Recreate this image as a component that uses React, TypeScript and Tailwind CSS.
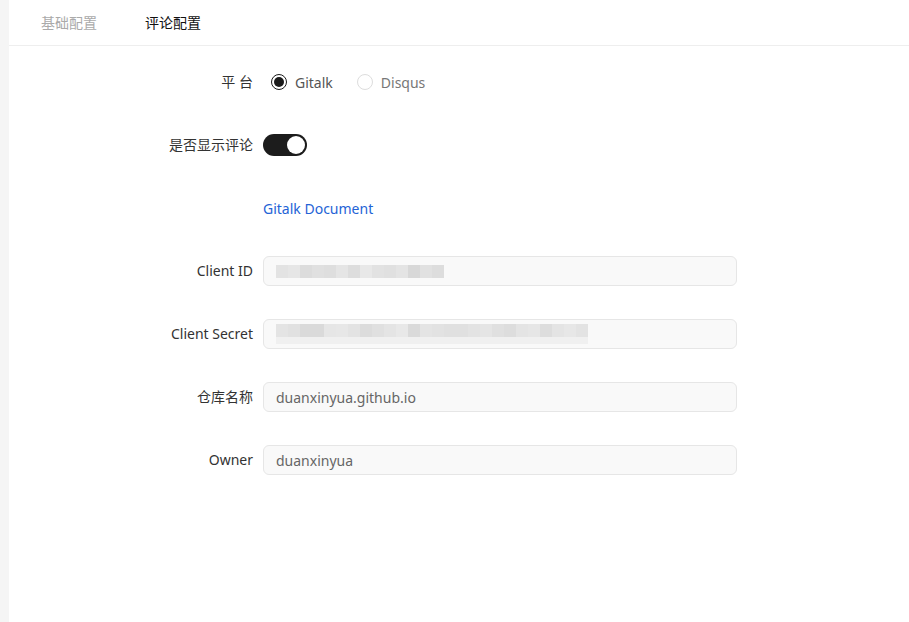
import { useState } from "react";

const font = {
  fontFamily: '"Noto Sans", "Noto Sans CJK SC", sans-serif',
};

function Row({ label, children }: { label: string; children: React.ReactNode }) {
  return (
    <div className="flex h-[30px] items-center">
      <label className="w-[254px] shrink-0 pr-[10px] text-right text-[14px] leading-[20px] text-[#333]">{label}</label>
      <div className="flex flex-1 items-center">{children}</div>
    </div>
  );
}

function Radio({ checked, label }: { checked: boolean; label: string }) {
  return (
    <span className="mr-[24px] flex items-center gap-[8px]">
      <span
        className={
          checked
            ? "flex h-[16px] w-[16px] items-center justify-center rounded-full border border-[#1a1a1a] bg-white"
            : "h-[16px] w-[16px] rounded-full border border-[#ddd] bg-white"
        }
      >
        {checked && <span className="h-[10px] w-[10px] rounded-full bg-[#1a1a1a]" />}
      </span>
      <span className={checked ? "text-[14px] text-[#555]" : "text-[14px] text-[#777]"}>{label}</span>
    </span>
  );
}

// blurred value: a row of grey blocks standing in for masked text
function Blur({ shades }: { shades: string[] }) {
  return (
    <div className="flex h-[13px]">
      {shades.map((s, i) => (
        <span key={i} className="h-full w-[12px]" style={{ backgroundColor: s }} />
      ))}
    </div>
  );
}

function Field({ children }: { children: React.ReactNode }) {
  return (
    <div className="flex h-[30px] w-[474px] items-center rounded-[6px] border border-[#e6e6e6] bg-[#f9f9f9] px-[12px] text-[14px] text-[#666]">
      {children}
    </div>
  );
}

export default function App() {
  const [on, setOn] = useState(true);
  const idShades = ["#e3e3e3", "#e6e6e6", "#dcdcdc", "#e0e0e0", "#dedede", "#e5e5e5", "#dddddd", "#e8e8e8", "#e2e2e2", "#e0e0e0", "#e4e4e4", "#d8d8d8", "#e1e1e1", "#dddddd"];
  const secretShades = ["#e4e4e4", "#e1e1e1", "#dadada", "#dadada", "#e6e6e6", "#e7e7e7", "#e3e3e3", "#dcdcdc", "#e0e0e0", "#e4e4e4", "#e8e8e8", "#dadada", "#e4e4e4", "#e2e2e2", "#e0e0e0", "#e0e0e0", "#e3e3e3", "#e5e5e5", "#e0e0e0", "#dddddd", "#e4e4e4", "#e6e6e6", "#dddddd", "#e4e4e4", "#e7e7e7", "#e3e3e3"];

  return (
    <div className="flex min-h-[622px] w-full bg-white" style={font}>
      <div className="w-[9px] shrink-0 bg-[#f5f5f5]" />
      <div className="flex-1">
        <div className="flex h-[46px] items-center gap-[48px] border-b border-[#eeeeee] pl-[32px]">
          <span className="text-[14px] text-[#aaa]">基础配置</span>
          <span className="text-[14px] text-[#111]">评论配置</span>
        </div>

        <div className="flex flex-col gap-[33px] pt-[21px]">
          <Row label="平 台">
            <div className="ml-[8px] flex items-center">
              <Radio checked label="Gitalk" />
              <Radio checked={false} label="Disqus" />
            </div>
          </Row>

          <Row label="是否显示评论">
            <button
              onClick={() => setOn(!on)}
              className="flex h-[22px] w-[44px] items-center justify-end rounded-full bg-[#1c1c1c] p-[2px]"
            >
              <span className="h-[18px] w-[18px] rounded-full bg-white" />
            </button>
          </Row>

          <Row label="">
            <a className="text-[14px] text-[#2463d6]">Gitalk Document</a>
          </Row>

          <Row label="Client ID">
            <Field>
              <Blur shades={idShades} />
            </Field>
          </Row>

          <Row label="Client Secret">
            <Field>
              <div className="flex flex-col">
                <Blur shades={secretShades} />
                <div className="flex h-[7px]">
                  {secretShades.map((_, i) => (
                    <span key={i} className="h-full w-[12px] bg-[#f0f0f0]" />
                  ))}
                </div>
              </div>
            </Field>
          </Row>

          <Row label="仓库名称">
            <Field>duanxinyua.github.io</Field>
          </Row>

          <Row label="Owner">
            <Field>duanxinyua</Field>
          </Row>
        </div>
      </div>
    </div>
  );
}
